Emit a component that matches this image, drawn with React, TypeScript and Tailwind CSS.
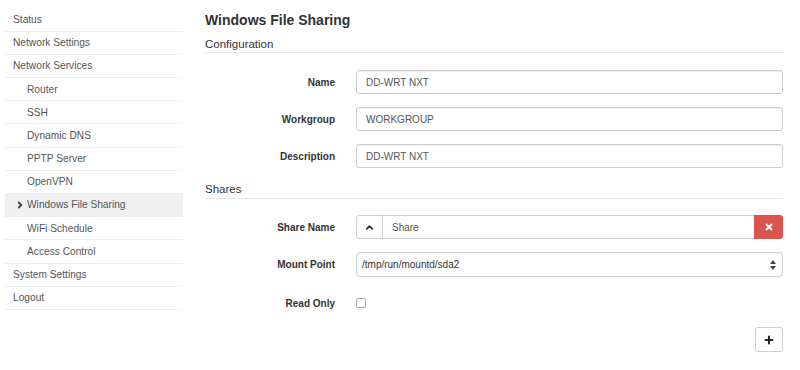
import { ChevronRight, ChevronUp, X, Plus } from "lucide-react";

const menu = [
  { label: "Status", level: 0 },
  { label: "Network Settings", level: 0 },
  { label: "Network Services", level: 0 },
  { label: "Router", level: 1 },
  { label: "SSH", level: 1 },
  { label: "Dynamic DNS", level: 1 },
  { label: "PPTP Server", level: 1 },
  { label: "OpenVPN", level: 1 },
  { label: "Windows File Sharing", level: 1, active: true },
  { label: "WiFi Schedule", level: 1 },
  { label: "Access Control", level: 1 },
  { label: "System Settings", level: 0 },
  { label: "Logout", level: 0 },
];

const Label = ({ children }: { children: string }) => (
  <div className="w-[130px] shrink-0 pr-0 text-right text-[10px] font-bold text-[#333]">{children}</div>
);

const TextInput = ({ value }: { value: string }) => (
  <div className="ml-[21px] flex h-[24px] flex-1 items-center rounded-[3px] border border-[#ccc] bg-white pl-[9px] text-[10px] text-[#555] shadow-[inset_0_1px_1px_rgba(0,0,0,0.06)]">
    {value}
  </div>
);

export default function App() {
  return (
    <div
      className="flex h-[370px] w-[800px] bg-white text-[#555]"
      style={{ fontFamily: '"Liberation Sans", Arial, sans-serif' }}
    >
      {/* 左メニュー */}
      <nav className="ml-[5px] mt-[8.5px] w-[178px] shrink-0">
        {menu.map((item) => (
          <div
            key={item.label}
            className={`relative flex h-[23.2px] items-center border-b border-[#eee] text-[10.2px] ${
              item.active ? "bg-[#efefef]" : ""
            } ${item.level ? "pl-[22px]" : "pl-[8px]"}`}
          >
            {item.active && (
              <ChevronRight size={10} strokeWidth={4.5} className="absolute left-[10px] text-[#444]" />
            )}
            {item.label}
          </div>
        ))}
      </nav>

      {/* メイン */}
      <main className="ml-[22px] mr-[17px] flex-1">
        <h1 className="mt-[10px] h-[20px] text-[14px] font-bold leading-[20px] text-[#333]">
          Windows File Sharing
        </h1>
        <h2 className="mt-[6px] border-b border-[#e5e5e5] text-[11.5px] leading-[16px] text-[#333]">
          Configuration
        </h2>

        <div className="mt-[17px] flex flex-col gap-[13px]">
          <div className="flex items-center">
            <Label>Name</Label>
            <TextInput value="DD-WRT NXT" />
          </div>
          <div className="flex items-center">
            <Label>Workgroup</Label>
            <TextInput value="WORKGROUP" />
          </div>
          <div className="flex items-center">
            <Label>Description</Label>
            <TextInput value="DD-WRT NXT" />
          </div>
        </div>

        <h2 className="mt-[13px] border-b border-[#e5e5e5] text-[11.5px] leading-[17px] text-[#333]">
          Shares
        </h2>

        <div className="mt-[16px] flex items-center">
          <Label>Share Name</Label>
          <div className="ml-[21px] flex h-[24px] flex-1">
            <div className="flex w-[27px] items-center justify-center rounded-l-[3px] border border-[#ccc] bg-white text-[#333]">
              <ChevronUp size={11} strokeWidth={4} />
            </div>
            <div className="flex flex-1 items-center border-y border-[#ccc] pl-[9px] text-[10px] text-[#555]">
              Share
            </div>
            <div className="flex w-[29px] items-center justify-center rounded-r-[3px] bg-[#d9534f] text-white">
              <X size={10} strokeWidth={4.5} />
            </div>
          </div>
        </div>

        <div className="mt-[13px] flex items-center">
          <Label>Mount Point</Label>
          <div className="ml-[21px] flex h-[25px] flex-1 items-center justify-between rounded-[4px] border border-[#ccc] bg-white pl-[5px] pr-[6px] text-[10px] text-[#333]">
            <span>/tmp/run/mountd/sda2</span>
            <svg width="6" height="10" viewBox="0 0 6 10">
              <path d="M3 0 L6 4 L0 4 Z M3 10 L6 6 L0 6 Z" fill="#444" />
            </svg>
          </div>
        </div>

        <div className="mt-[14px] flex h-[24px] items-center">
          <Label>Read Only</Label>
          <div className="ml-[21px] h-[10px] w-[10px] rounded-[2px] border border-[#aaa] bg-white" />
        </div>

        <div className="mt-[12px] flex justify-end">
          <div className="flex h-[25px] w-[28px] items-center justify-center rounded-[3px] border border-[#ccc] bg-white text-[#222]">
            <Plus size={12} strokeWidth={4} />
          </div>
        </div>
      </main>
    </div>
  );
}
